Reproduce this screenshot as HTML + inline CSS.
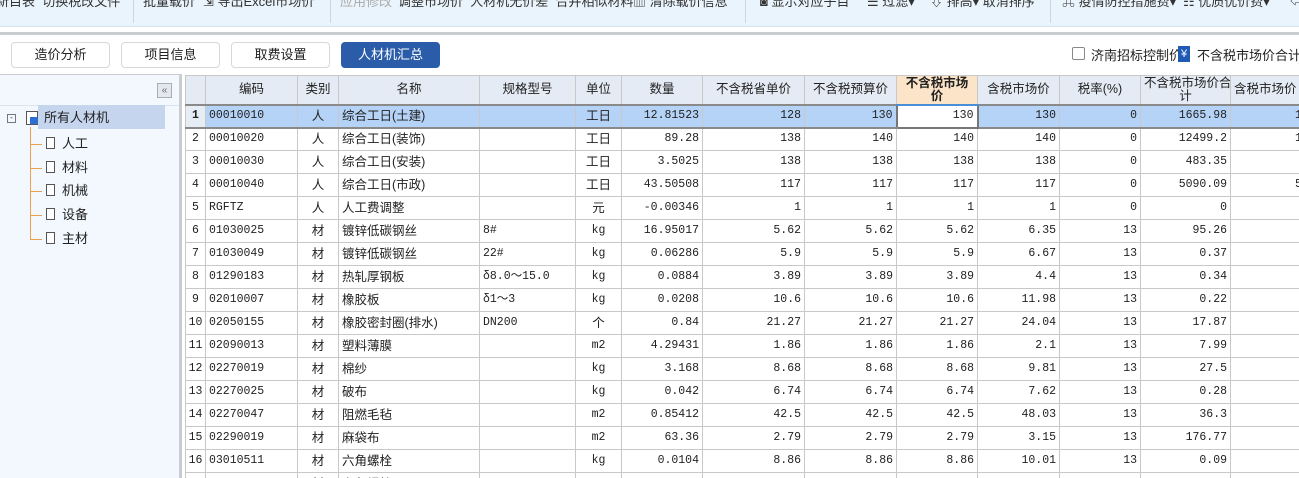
<!DOCTYPE html><html><head><meta charset="utf-8"><style>
*{margin:0;padding:0;box-sizing:border-box}
html,body{width:1299px;height:478px;overflow:hidden}
body{background:#fff;font-family:"Liberation Sans","Noto Sans CJK SC",sans-serif;font-size:12px;color:#222;position:relative}
.tb{position:absolute;left:0;top:0;width:1299px;height:27px;background:#eaf4fc;border-bottom:1px solid #d8e2ea}
.tb span{position:absolute;top:-9px;font-size:13px;color:#333;white-space:nowrap}
.sep{position:absolute;top:0;height:23px;width:1px;background:#cdd6de}
.gl{position:absolute;left:0;top:32px;width:1299px;height:3px;background:#c9cdd2}
.btn{position:absolute;top:42px;height:26px;width:99px;border:1px solid #d5d8dc;border-radius:4px;text-align:center;line-height:24px;font-size:13px;background:#fff}
.btn.on{background:#2a5caa;color:#fff;border-color:#2a5caa}
.left{position:absolute;left:0;top:74px;width:182px;height:404px;background:#f2f8fd;border-right:3px solid #c9cdd2;border-top:1px solid #c9cdd2}
.tree{position:absolute;font-size:13px;line-height:16px}
.gridwrap{position:absolute;left:185px;top:75px;width:1114px;height:403px;overflow:hidden}
table{border-collapse:collapse;table-layout:fixed;width:1145px}
td,th{border:1px solid #c8c8c8;height:23px;line-height:20px;white-space:nowrap;overflow:hidden;font-family:"Liberation Mono","Noto Sans CJK SC",monospace;font-size:11.5px;padding:0 3px;font-weight:normal;vertical-align:middle}
th{height:29px;background:#e4ebf4;font-family:"Liberation Sans","Noto Sans CJK SC",sans-serif;font-size:12.5px;line-height:13px}
th.hl{background:#fce4c8;font-weight:bold;border-bottom:2px solid #4a8ed8}
td.r{text-align:right}td.c{text-align:center}
td.n{text-align:center;background:#fff;padding:0}
td.cj{font-family:"Liberation Sans","Noto Sans CJK SC",sans-serif;font-size:12.5px;line-height:16px}
tr.sel td{background:#b5d3f7;border-top:2px solid #8a8a8a;border-bottom:2px solid #8a8a8a}
tr.sel td.n{background:#e6edf5;font-weight:bold}
tr.sel td.w{background:#fff;border:2px solid #777}
</style></head><body>
<div class="tb">
<span style="left:-4px">新目表&nbsp; 切换税改文件</span><div class="sep" style="left:133px"></div>
<span style="left:143px">批量载价</span><span style="left:203px">⇲ 导出Excel市场价</span><div class="sep" style="left:330px"></div>
<span style="left:340px;color:#aaa">应用修改</span><span style="left:398px">调整市场价&nbsp; 人材机无价差&nbsp; 合并相似材料</span><span style="left:633px">▥ 清除载价信息</span><div class="sep" style="left:745px"></div>
<span style="left:760px">◙ 显示对应子目</span><span style="left:867px">☰ 过滤▾</span><span style="left:930px">⇩ 排高▾ 取消排序</span><div class="sep" style="left:1050px"></div>
<span style="left:1062px">⌘ 疫情防控措施费▾</span><span style="left:1183px">☷ 优质优价费▾</span><span style="left:1290px">⇦</span>
</div>
<div class="gl"></div>
<div class="btn" style="left:11px">造价分析</div><div class="btn" style="left:121px">项目信息</div><div class="btn" style="left:231px">取费设置</div><div class="btn on" style="left:341px">人材机汇总</div>
<div style="position:absolute;left:1072px;top:47px;width:13px;height:13px;border:1px solid #888;border-radius:2px"></div>
<div style="position:absolute;left:1091px;top:45px;font-size:13px">济南招标控制价</div>
<div style="position:absolute;left:1178px;top:46px;width:12px;height:16px;background:#1f5bb5;color:#fff;font-size:11px;text-align:center;line-height:16px">¥</div>
<div style="position:absolute;left:1197px;top:45px;font-size:13px;white-space:nowrap">不含税市场价合计:</div>
<div class="left">
<div style="position:absolute;left:157px;top:8px;width:15px;height:15px;border:1px solid #aab;background:#e4e8ee;font-size:10px;text-align:center;line-height:13px;color:#667">«</div>
<div style="position:absolute;left:0;top:30px;width:179px;height:1px;background:#dde3ea"></div>
<div style="position:absolute;left:38px;top:30px;width:127px;height:24px;background:#c5d5ee"></div>
<div style="position:absolute;left:7px;top:39px;width:9px;height:9px;border:1px solid #777;font-size:8px;line-height:6px;text-align:center">-</div>
<div style="position:absolute;left:26px;top:36px;width:12px;height:14px;border:1px solid #555;background:#fff"><div style="position:absolute;left:3px;top:5px;width:8px;height:7px;background:#2d6fd0"></div></div>
<div class="tree" style="left:44px;top:35px">所有人材机</div>
<div style="position:absolute;left:30px;top:52px;width:1px;height:112px;background:#e8a050"></div>
<div style="position:absolute;left:30px;top:69px;width:12px;height:1px;background:#e8a050"></div>
<div style="position:absolute;left:30px;top:93px;width:12px;height:1px;background:#e8a050"></div>
<div style="position:absolute;left:30px;top:116px;width:12px;height:1px;background:#e8a050"></div>
<div style="position:absolute;left:30px;top:140px;width:12px;height:1px;background:#e8a050"></div>
<div style="position:absolute;left:30px;top:164px;width:12px;height:1px;background:#e8a050"></div>
<div style="position:absolute;left:46px;top:62px;width:9px;height:12px;border:1px solid #555;background:#fff"></div>
<div style="position:absolute;left:46px;top:86px;width:9px;height:12px;border:1px solid #555;background:#fff"></div>
<div style="position:absolute;left:46px;top:109px;width:9px;height:12px;border:1px solid #555;background:#fff"></div>
<div style="position:absolute;left:46px;top:133px;width:9px;height:12px;border:1px solid #555;background:#fff"></div>
<div style="position:absolute;left:46px;top:157px;width:9px;height:12px;border:1px solid #555;background:#fff"></div>
<div class="tree" style="left:62px;top:61px">人工</div><div class="tree" style="left:62px;top:85px">材料</div><div class="tree" style="left:62px;top:108px">机械</div><div class="tree" style="left:62px;top:132px">设备</div><div class="tree" style="left:62px;top:156px">主材</div>
</div>
<div class="gridwrap"><table>
<colgroup><col style="width:20px"><col style="width:92px"><col style="width:41px"><col style="width:141px"><col style="width:96px"><col style="width:46px"><col style="width:81px"><col style="width:102px"><col style="width:92px"><col style="width:81px"><col style="width:82px"><col style="width:81px"><col style="width:90px"><col style="width:100px"></colgroup>
<tr><th></th><th>编码</th><th>类别</th><th>名称</th><th>规格型号</th><th>单位</th><th>数量</th><th>不含税省单价</th><th>不含税预算价</th><th class="hl">不含税市场<br>价</th><th>含税市场价</th><th>税率(%)</th><th>不含税市场价合<br>计</th><th style="text-align:left">含税市场价</th></tr>
<tr class="sel"><td class="n">1</td><td>00010010</td><td class="c cj">人</td><td class="cj">综合工日(土建)</td><td></td><td class="c cj">工日</td><td class="r">12.81523</td><td class="r">128</td><td class="r">130</td><td class="r w">130</td><td class="r">130</td><td class="r">0</td><td class="r">1665.98</td><td style="padding-left:64px">1</td></tr>
<tr><td class="n">2</td><td>00010020</td><td class="c cj">人</td><td class="cj">综合工日(装饰)</td><td></td><td class="c cj">工日</td><td class="r">89.28</td><td class="r">138</td><td class="r">140</td><td class="r">140</td><td class="r">140</td><td class="r">0</td><td class="r">12499.2</td><td style="padding-left:64px">1</td></tr>
<tr><td class="n">3</td><td>00010030</td><td class="c cj">人</td><td class="cj">综合工日(安装)</td><td></td><td class="c cj">工日</td><td class="r">3.5025</td><td class="r">138</td><td class="r">138</td><td class="r">138</td><td class="r">138</td><td class="r">0</td><td class="r">483.35</td><td></td></tr>
<tr><td class="n">4</td><td>00010040</td><td class="c cj">人</td><td class="cj">综合工日(市政)</td><td></td><td class="c cj">工日</td><td class="r">43.50508</td><td class="r">117</td><td class="r">117</td><td class="r">117</td><td class="r">117</td><td class="r">0</td><td class="r">5090.09</td><td style="padding-left:64px">5</td></tr>
<tr><td class="n">5</td><td>RGFTZ</td><td class="c cj">人</td><td class="cj">人工费调整</td><td></td><td class="c cj">元</td><td class="r">-0.00346</td><td class="r">1</td><td class="r">1</td><td class="r">1</td><td class="r">1</td><td class="r">0</td><td class="r">0</td><td></td></tr>
<tr><td class="n">6</td><td>01030025</td><td class="c cj">材</td><td class="cj">镀锌低碳钢丝</td><td>8#</td><td class="c">kg</td><td class="r">16.95017</td><td class="r">5.62</td><td class="r">5.62</td><td class="r">5.62</td><td class="r">6.35</td><td class="r">13</td><td class="r">95.26</td><td></td></tr>
<tr><td class="n">7</td><td>01030049</td><td class="c cj">材</td><td class="cj">镀锌低碳钢丝</td><td>22#</td><td class="c">kg</td><td class="r">0.06286</td><td class="r">5.9</td><td class="r">5.9</td><td class="r">5.9</td><td class="r">6.67</td><td class="r">13</td><td class="r">0.37</td><td></td></tr>
<tr><td class="n">8</td><td>01290183</td><td class="c cj">材</td><td class="cj">热轧厚钢板</td><td>δ8.0～15.0</td><td class="c">kg</td><td class="r">0.0884</td><td class="r">3.89</td><td class="r">3.89</td><td class="r">3.89</td><td class="r">4.4</td><td class="r">13</td><td class="r">0.34</td><td></td></tr>
<tr><td class="n">9</td><td>02010007</td><td class="c cj">材</td><td class="cj">橡胶板</td><td>δ1～3</td><td class="c">kg</td><td class="r">0.0208</td><td class="r">10.6</td><td class="r">10.6</td><td class="r">10.6</td><td class="r">11.98</td><td class="r">13</td><td class="r">0.22</td><td></td></tr>
<tr><td class="n">10</td><td>02050155</td><td class="c cj">材</td><td class="cj">橡胶密封圈(排水)</td><td>DN200</td><td class="c cj">个</td><td class="r">0.84</td><td class="r">21.27</td><td class="r">21.27</td><td class="r">21.27</td><td class="r">24.04</td><td class="r">13</td><td class="r">17.87</td><td></td></tr>
<tr><td class="n">11</td><td>02090013</td><td class="c cj">材</td><td class="cj">塑料薄膜</td><td></td><td class="c">m2</td><td class="r">4.29431</td><td class="r">1.86</td><td class="r">1.86</td><td class="r">1.86</td><td class="r">2.1</td><td class="r">13</td><td class="r">7.99</td><td></td></tr>
<tr><td class="n">12</td><td>02270019</td><td class="c cj">材</td><td class="cj">棉纱</td><td></td><td class="c">kg</td><td class="r">3.168</td><td class="r">8.68</td><td class="r">8.68</td><td class="r">8.68</td><td class="r">9.81</td><td class="r">13</td><td class="r">27.5</td><td></td></tr>
<tr><td class="n">13</td><td>02270025</td><td class="c cj">材</td><td class="cj">破布</td><td></td><td class="c">kg</td><td class="r">0.042</td><td class="r">6.74</td><td class="r">6.74</td><td class="r">6.74</td><td class="r">7.62</td><td class="r">13</td><td class="r">0.28</td><td></td></tr>
<tr><td class="n">14</td><td>02270047</td><td class="c cj">材</td><td class="cj">阻燃毛毡</td><td></td><td class="c">m2</td><td class="r">0.85412</td><td class="r">42.5</td><td class="r">42.5</td><td class="r">42.5</td><td class="r">48.03</td><td class="r">13</td><td class="r">36.3</td><td></td></tr>
<tr><td class="n">15</td><td>02290019</td><td class="c cj">材</td><td class="cj">麻袋布</td><td></td><td class="c">m2</td><td class="r">63.36</td><td class="r">2.79</td><td class="r">2.79</td><td class="r">2.79</td><td class="r">3.15</td><td class="r">13</td><td class="r">176.77</td><td></td></tr>
<tr><td class="n">16</td><td>03010511</td><td class="c cj">材</td><td class="cj">六角螺栓</td><td></td><td class="c">kg</td><td class="r">0.0104</td><td class="r">8.86</td><td class="r">8.86</td><td class="r">8.86</td><td class="r">10.01</td><td class="r">13</td><td class="r">0.09</td><td></td></tr>
<tr><td class="n">17</td><td></td><td class="c cj">材</td><td class="cj">六角螺栓</td><td></td><td></td><td></td><td></td><td></td><td></td><td></td><td></td><td></td><td></td></tr>
</table></div>
</body></html>
